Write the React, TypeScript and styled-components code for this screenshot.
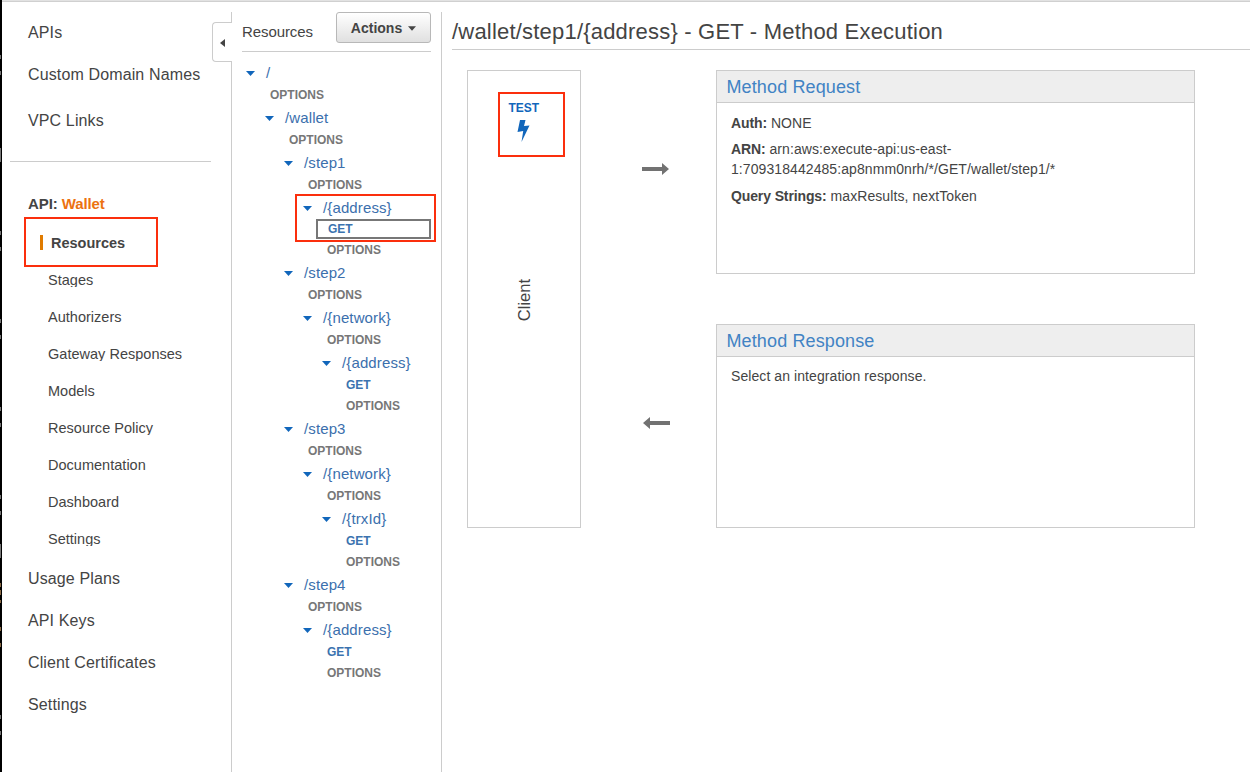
import React from 'react';
import styled, { createGlobalStyle } from 'styled-components';

const GlobalStyle = createGlobalStyle`
  *, *::before, *::after { box-sizing: border-box; }
  body {
    margin: 0;
    background: #fff;
    color: #444;
    font-family: "Liberation Sans", Arial, Helvetica, sans-serif;
    overflow: hidden;
  }
`;

const Window = styled.div`
  display: flex;
  height: 772px;
  width: 1250px;
`;

const EdgeStrip = styled.svg`
  flex: none;
  width: 2px;
  height: 772px;
  background: #000;
`;

const Page = styled.div`
  flex: 1;
  min-width: 0;
  display: flex;
  flex-direction: column;
`;

const TopEdge = styled.div`
  flex: none;
  height: 2px;
  background: #e2e2e2;
  border-bottom: 1px solid #d0d0d0;
`;

const Columns = styled.div`
  flex: 1;
  display: flex;
  padding-top: 10px;
`;

const Sidebar = styled.nav`
  position: relative;
  width: 230px;
  border-right: 1px solid #ccc;
  padding-left: 26px;
`;

const CollapseTab = styled.div`
  position: absolute;
  top: 10px;
  right: -1px;
  width: 20px;
  height: 40px;
  border: 1px solid #ccc;
  border-right: 0;
  border-radius: 4px 0 0 4px;
  background: #fff;
  display: flex;
  align-items: center;
  padding: 2px 0 0 7px;
`;

const NavItem = styled.div<{ $offset?: number }>`
  height: 42px;
  line-height: 42px;
  margin-top: ${(p) => p.$offset ?? 0}px;
  font-size: 16px;
  letter-spacing: 0.13px;
  white-space: nowrap;
`;

const NavDivider = styled.div`
  width: 201px;
  height: 1px;
  margin: 19px 0 33px -18px;
  background: #ccc;
`;

const ApiName = styled.div`
  height: 18px;
  line-height: 18px;
  font-size: 15px;
  font-weight: bold;
  letter-spacing: -0.1px;
  span { color: #ec7211; }
`;

const ActiveSub = styled.div`
  width: 134px;
  height: 50px;
  margin: 4px 0 0 -4px;
  border: 2px solid #fb2f0d;
  padding: 2px 0 0 14px;
  display: flex;
  align-items: center;
  font-size: 14.5px;
  font-weight: bold;
  &::before {
    content: '';
    width: 3px;
    height: 15px;
    margin: -1px 8px 0 0;
    background: #e07b00;
  }
`;

const SubItem = styled.div`
  margin: 0 0 23px 20px;
  height: 14px;
  line-height: 14px;
  overflow: hidden;
  font-size: 14.5px;
  letter-spacing: 0.02px;
`;

const SubList = styled.div`
  padding-top: 6px;
  height: 291px;
`;

const Tree = styled.section`
  width: 210px;
  border-right: 1px solid #ccc;
  padding: 0 10px;
`;

const TreeHeader = styled.header`
  height: 40px;
  display: flex;
  justify-content: space-between;
  align-items: flex-start;
  border-bottom: 1px solid #ccc;
  margin-bottom: 9px;
  font-size: 15px;
  line-height: 40px;
  letter-spacing: -0.08px;
`;

const ActionsButton = styled.button`
  width: 95px;
  height: 31px;
  border: 1px solid #b8b8b8;
  border-radius: 3px;
  background: linear-gradient(#fff, #e0e0e0);
  color: #444;
  font: bold 14px "Liberation Sans", Arial, sans-serif;
  letter-spacing: 0;
  display: flex;
  align-items: center;
  justify-content: center;
  gap: 6px;
  padding: 0;
  svg { margin-top: 2px; }
`;

const Branch = styled.div<{ $depth: number }>`
  padding-left: ${(p) => (p.$depth ? 19 : 0)}px;
`;

const ResourceRow = styled.div`
  height: 24px;
  display: flex;
  align-items: center;
  padding-left: 4px;
  gap: 11px;
  font-size: 15px;
  letter-spacing: 0.12px;
  color: #3b6fad;
`;

const ResourceName = styled.span`
  padding-bottom: 2px;
`;

const MethodRow = styled.div<{ $get?: boolean; $selected?: boolean }>`
  height: 21px;
  line-height: 21px;
  margin-left: 28px;
  font-size: 12px;
  font-weight: bold;
  color: ${(p) => (p.$get ? '#3b73af' : '#777')};
  ${(p) =>
    p.$selected &&
    `
    position: relative;
    top: -1px;
    height: 20px;
    line-height: 16px;
    margin-left: 17px;
    padding-left: 10px;
    border: 2px solid #777;
  `}
`;

const Highlighted = styled.div`
  position: relative;
  &::after {
    content: '';
    position: absolute;
    left: -4px;
    right: -5px;
    top: -2px;
    height: 48px;
    border: 2px solid #fb2f0d;
  }
`;

const Main = styled.main`
  flex: 1;
  padding-left: 10px;
`;

const Title = styled.h1`
  margin: 0;
  height: 38px;
  line-height: 39px;
  border-bottom: 1px solid #ccc;
  font-size: 22px;
  font-weight: normal;
  letter-spacing: 0.2px;
  white-space: nowrap;
`;

const Flow = styled.div`
  display: flex;
  padding: 20px 0 0 15px;
`;

const ClientBox = styled.div`
  width: 114px;
  height: 458px;
  border: 1px solid #ccc;
  display: flex;
  flex-direction: column;
  align-items: center;
`;

const TestBox = styled.div`
  width: 67px;
  height: 65px;
  margin: 21px 0 0 14px;
  border: 2px solid #fb2f0d;
  padding: 6px 0 0 9px;
  color: #1166bb;
  font-size: 12px;
  line-height: 16px;
  font-weight: bold;
  letter-spacing: -0.05px;
  svg { display: block; margin: 4px 0 0 8px; }
`;

const ClientLabel = styled.div`
  margin-top: 122px;
  writing-mode: vertical-rl;
  transform: rotate(180deg);
  font-size: 16.5px;
  line-height: 18px;
`;

const Arrows = styled.div`
  width: 135px;
  padding: 93px 0 0 60px;
  display: flex;
  flex-direction: column;
  gap: 242px;
`;

const Panels = styled.div`
  display: flex;
  flex-direction: column;
  gap: 50px;
`;

const Panel = styled.section`
  width: 479px;
  height: 204px;
  border: 1px solid #ccc;
`;

const PanelTitle = styled.h2`
  margin: 0;
  height: 32px;
  line-height: 32px;
  padding-left: 9.5px;
  border-bottom: 1px solid #ccc;
  background: #eee;
  color: #4183c4;
  font-size: 18px;
  font-weight: normal;
  letter-spacing: 0.12px;
`;

const PanelBody = styled.div<{ $top: number }>`
  padding: ${(p) => p.$top}px 14px 0;
  font-size: 14px;
  line-height: 20px;
  letter-spacing: 0.08px;
  p { margin: 0 0 6px; }
  p + p + p { margin-top: 7px; }
  b { letter-spacing: -0.12px; }
`;

const Caret = ({ color = '#1166bb', w = 9 }: { color?: string; w?: number }) => (
  <svg width={w} height="5" viewBox="0 0 9 5"><path d="M0 0H9L4.5 5Z" fill={color} /></svg>
);

const ArrowRight = () => (
  <svg width="29" height="12" viewBox="0 0 29 12">
    <path d="M1 4H21V0L28 6L21 12V8H1Z" fill="#727272" />
  </svg>
);

const ArrowLeft = () => (
  <svg width="29" height="12" viewBox="0 0 29 12">
    <path d="M29 4H9V0L2 6L9 12V8H29Z" fill="#727272" />
  </svg>
);

const Bolt = () => (
  <svg width="13" height="22" viewBox="0 0 13 22">
    <path d="M3 0H8.5L7 6L12.5 5.5L4.5 22L6.2 11L0.5 12Z" fill="#1166bb" />
  </svg>
);

type Node = { path: string; get?: boolean; selected?: boolean; children?: Node[] };

const root: Node = {
  path: '/',
  children: [
    {
      path: '/wallet',
      children: [
        { path: '/step1', children: [{ path: '/{address}', get: true, selected: true }] },
        { path: '/step2', children: [{ path: '/{network}', children: [{ path: '/{address}', get: true }] }] },
        { path: '/step3', children: [{ path: '/{network}', children: [{ path: '/{trxId}', get: true }] }] },
        { path: '/step4', children: [{ path: '/{address}', get: true }] },
      ],
    },
  ],
};

const TreeNode = ({ node, depth = 0 }: { node: Node; depth?: number }) => {
  const head = (
    <>
      <ResourceRow><Caret /><ResourceName>{node.path}</ResourceName></ResourceRow>
      {node.get && <MethodRow $get $selected={node.selected}>GET</MethodRow>}
    </>
  );
  return (
    <Branch $depth={depth}>
      {node.selected ? <Highlighted>{head}</Highlighted> : head}
      <MethodRow>OPTIONS</MethodRow>
      {node.children?.map((c) => <TreeNode key={c.path} node={c} depth={depth + 1} />)}
    </Branch>
  );
};

const subItems = ['Stages', 'Authorizers', 'Gateway Responses', 'Models', 'Resource Policy', 'Documentation', 'Dashboard', 'Settings'];

// Slivers of the window behind, as [top, height, colour].
const slivers: [number, number, string][] = [
  [55, 4, '#777'], [71, 4, '#777'], [148, 14, '#777'], [231, 4, '#777'], [247, 4, '#777'],
  [319, 4, '#777'], [335, 4, '#777'], [407, 4, '#777'], [423, 4, '#777'], [495, 4, '#777'],
  [511, 4, '#777'], [544, 14, '#777'], [583, 4, '#8a6a45'], [590, 5, '#8a6a45'], [600, 3, '#8a6a45'],
  [627, 4, '#8a6a45'], [643, 4, '#8a6a45'], [715, 4, '#777'], [731, 4, '#777'],
];

export default function App() {
  return (
    <Window>
      <GlobalStyle />
      <EdgeStrip viewBox="0 0 2 772">
        {slivers.map(([y, h, fill]) => <rect key={y} x="0" y={y} width="1" height={h} fill={fill} />)}
      </EdgeStrip>
      <Page>
        <TopEdge />
        <Columns>
          <Sidebar>
            <CollapseTab>
              <svg width="5" height="8" viewBox="0 0 5 8"><path d="M5 0V8L0 4Z" fill="#444" /></svg>
            </CollapseTab>
            <NavItem>APIs</NavItem>
            <NavItem>Custom Domain Names</NavItem>
            <NavItem $offset={4}>VPC Links</NavItem>
            <NavDivider />
            <ApiName>API: <span>Wallet</span></ApiName>
            <ActiveSub>Resources</ActiveSub>
            <SubList>
              {subItems.map((s) => <SubItem key={s}>{s}</SubItem>)}
            </SubList>
            <NavItem>Usage Plans</NavItem>
            <NavItem>API Keys</NavItem>
            <NavItem>Client Certificates</NavItem>
            <NavItem>Settings</NavItem>
          </Sidebar>
          <Tree>
            <TreeHeader>
              Resources
              <ActionsButton>Actions <Caret color="#444" w={8} /></ActionsButton>
            </TreeHeader>
            <TreeNode node={root} />
          </Tree>
          <Main>
            <Title>/wallet/step1/{'{address}'} - GET - Method Execution</Title>
            <Flow>
              <ClientBox>
                <TestBox>TEST<Bolt /></TestBox>
                <ClientLabel>Client</ClientLabel>
              </ClientBox>
              <Arrows><ArrowRight /><ArrowLeft /></Arrows>
              <Panels>
                <Panel>
                  <PanelTitle>Method Request</PanelTitle>
                  <PanelBody $top={10}>
                    <p><b>Auth:</b> NONE</p>
                    <p><b>ARN:</b> arn:aws:execute-api:us-east-<br />1:709318442485:ap8nmm0nrh/*/GET/wallet/step1/*</p>
                    <p><b>Query Strings:</b> maxResults, nextToken</p>
                  </PanelBody>
                </Panel>
                <Panel>
                  <PanelTitle>Method Response</PanelTitle>
                  <PanelBody $top={9}><p>Select an integration response.</p></PanelBody>
                </Panel>
              </Panels>
            </Flow>
          </Main>
        </Columns>
      </Page>
    </Window>
  );
}
